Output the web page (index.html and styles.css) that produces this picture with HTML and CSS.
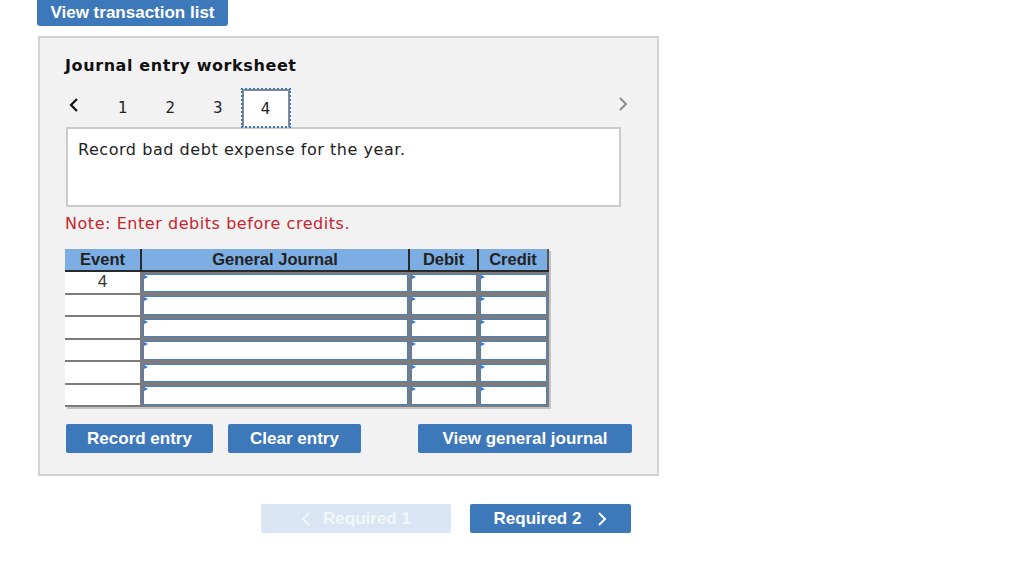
FILE: index.html
```html
<!DOCTYPE html>
<html>
<head>
<meta charset="utf-8">
<link rel="stylesheet" href="styles.css">
</head>
<body>
<div class="page">
  <button class="btn top-btn">View transaction list</button>
  <div class="panel">
    <h2 class="title">Journal entry worksheet</h2>
    <div class="tabs">
      <span class="chev chev-left"><svg width="12" height="16" viewBox="0 0 12 16"><path d="M9 2 L3 8 L9 14" fill="none" stroke="#111" stroke-width="2.2"/></svg></span>
      <span class="tab">1</span>
      <span class="tab">2</span>
      <span class="tab">3</span>
      <span class="tab active">4</span>
      <span class="spacer"></span>
      <span class="chev chev-right"><svg width="12" height="16" viewBox="0 0 12 16"><path d="M3 2 L9 8 L3 14" fill="none" stroke="#888" stroke-width="1.8"/></svg></span>
    </div>
    <div class="desc">Record bad debt expense for the year.</div>
    <p class="note">Note: Enter debits before credits.</p>
    <table class="journal">
      <colgroup>
        <col class="c-event"><col class="c-gj"><col class="c-dr"><col class="c-cr">
      </colgroup>
      <thead>
        <tr><th>Event</th><th>General Journal</th><th>Debit</th><th>Credit</th></tr>
      </thead>
      <tbody>
        <tr><td class="ev">4</td><td><div class="inp"></div></td><td><div class="inp"></div></td><td><div class="inp"></div></td></tr>
        <tr><td class="ev"></td><td><div class="inp"></div></td><td><div class="inp"></div></td><td><div class="inp"></div></td></tr>
        <tr><td class="ev"></td><td><div class="inp"></div></td><td><div class="inp"></div></td><td><div class="inp"></div></td></tr>
        <tr><td class="ev"></td><td><div class="inp"></div></td><td><div class="inp"></div></td><td><div class="inp"></div></td></tr>
        <tr><td class="ev"></td><td><div class="inp"></div></td><td><div class="inp"></div></td><td><div class="inp"></div></td></tr>
        <tr><td class="ev"></td><td><div class="inp"></div></td><td><div class="inp"></div></td><td><div class="inp"></div></td></tr>
      </tbody>
    </table>
    <div class="actions">
      <button class="btn act">Record entry</button>
      <button class="btn act">Clear entry</button>
      <button class="btn act view">View general journal</button>
    </div>
  </div>
  <div class="bottom-nav">
    <button class="btn req disabled"><svg width="10" height="16" viewBox="0 0 10 16"><path d="M8 2 L2 8 L8 14" fill="none" stroke="#f2f6fb" stroke-width="2"/></svg><span>Required 1</span></button>
    <button class="btn req"><span>Required 2</span><svg width="10" height="16" viewBox="0 0 10 16"><path d="M2 2 L8 8 L2 14" fill="none" stroke="#fff" stroke-width="2"/></svg></button>
  </div>
</div>
</body>
</html>
```

FILE: styles.css
```css
html, body {
  margin: 0;
  padding: 0;
  background: #ffffff;
}
.page {
  padding-left: 37px;
  width: 700px;
}
.btn {
  font-family: "Liberation Sans", Arial, sans-serif;
  font-weight: 700;
  color: #ffffff;
  background: #3d78ba;
  border: none;
  border-radius: 2px;
  cursor: pointer;
  padding: 0;
}
.top-btn {
  display: block;
  width: 191px;
  height: 26px;
  font-size: 17px;
  border-radius: 0 0 3px 3px;
}
.panel {
  margin-top: 10px;
  margin-left: 1px;
  width: 617px;
  height: 436px;
  background: #f2f2f2;
  border: 2px solid #d2d2d2;
  padding: 0;
  box-sizing: content-box;
}
.title {
  font-family: "DejaVu Sans", Verdana, sans-serif;
  font-weight: 700;
  font-size: 16px;
  letter-spacing: 0.6px;
  color: #111;
  margin: 18px 0 0 25px;
  line-height: 20px;
}
.tabs {
  display: flex;
  align-items: center;
  margin: 13px 0 0 28px;
  width: 561px;
  height: 38px;
  font-family: "DejaVu Sans", Verdana, sans-serif;
  font-size: 15px;
  color: #222;
}
.chev {
  display: flex;
  align-items: center;
}
.chev-left {
  width: 12px;
  margin-top: -7px;
}
.chev-right {
  margin-top: -9px;
}
.tab {
  width: 47.5px;
  text-align: center;
  line-height: 38px;
  height: 38px;
  box-sizing: border-box;
}
.tabs .tab:nth-child(2) { margin-left: 19px; }
.tab.active {
  width: 48px;
  background: #ffffff;
  border: 2px solid #8a8a8a;
  border-bottom: none;
  outline: 2px dotted #3b78c8;
  outline-offset: -1px;
  line-height: 36px;
}
.spacer { flex: 1; }
.desc {
  margin: 0 0 0 26px;
  background: #fff;
  border: 2px solid #cbcbcb;
  font-family: "DejaVu Sans", Verdana, sans-serif;
  font-size: 16px;
  letter-spacing: 0.55px;
  color: #222;
  padding: 11px 0 0 10px;
  box-sizing: border-box;
  width: 555px;
  height: 80px;
}
.note {
  margin: 7px 0 0 25px;
  font-family: "DejaVu Sans", Verdana, sans-serif;
  font-size: 16px;
  letter-spacing: 0.55px;
  color: #c4262e;
  line-height: 20px;
}
.journal {
  margin: 15px 0 0 25px;
  border-collapse: collapse;
  table-layout: fixed;
  width: 483px;
  font-family: "Liberation Sans", Arial, sans-serif;
  box-shadow: 2px 2px 0 #c4c4c4;
}
.c-event { width: 76px; }
.c-gj { width: 268px; }
.c-dr { width: 69px; }
.c-cr { width: 70px; }
.journal th {
  background: #7daee3;
  color: #222;
  font-size: 16.5px;
  font-weight: 700;
  height: 21px;
  padding: 0;
  border-right: 2px solid #2a2a2a;
  border-bottom: 2px solid #2a2a2a;
  line-height: 21px;
}
.journal th:last-child { border-right: 2px solid #555; }
.journal td {
  height: 22.5px;
  padding: 0;
  border-right: 2px solid #7b7b7b;
  border-bottom: 2px solid #7b7b7b;
  background: #7b7b7b;
  box-sizing: border-box;
}
.journal td.ev {
  background: #fff;
  text-align: center;
  font-size: 17px;
  color: #333;
  line-height: 19px;
  vertical-align: top;
}
.inp {
  position: relative;
  height: 16.5px;
  background: #fff;
  border: 1.5px solid #4a80c4;
  margin: 1px 0 0 1px;
}
.inp::before {
  content: "";
  position: absolute;
  left: 0;
  top: 0;
  border-left: 4px solid #3b78c8;
  border-top: 2px solid transparent;
  border-bottom: 2px solid transparent;
}
.actions {
  display: flex;
  margin: 17px 0 0 26px;
  height: 29px;
}
.act {
  height: 29px;
  font-size: 17px;
  margin-right: 15px;
}
.act:first-child { width: 147px; }
.act:nth-child(2) { width: 133px; }
.act.view { width: 214px; margin-left: 42px; margin-right: 0; }
.bottom-nav {
  display: flex;
  margin: 28px 0 0 224px;
}
.req {
  height: 29px;
  font-size: 17px;
  display: flex;
  align-items: center;
  justify-content: center;
  gap: 12px;
}
.req.disabled {
  width: 190px;
  background: #d9e5f2;
  color: #f2f6fb;
  margin-right: 19px;
}
.req:not(.disabled) {
  width: 161px;
  gap: 16px;
}
```
